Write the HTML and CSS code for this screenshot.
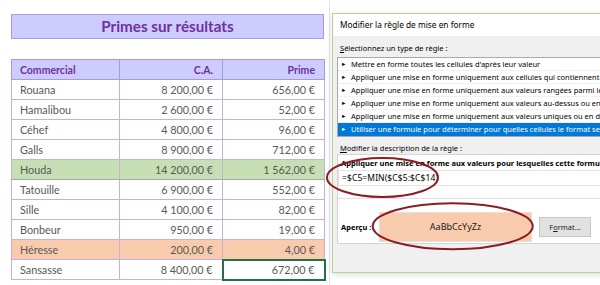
FILE: index.html
```html
<!DOCTYPE html>
<html lang="fr">
<head>
<meta charset="utf-8">
<link rel="stylesheet" href="styles.css">
</head>
<body>
<div class="page">
  <section class="sheet">
    <div class="title">Primes sur résultats</div>
    <table class="grid">
      <colgroup><col class="c1"><col class="c2"><col class="c3"></colgroup>
      <thead>
        <tr><th class="l">Commercial</th><th>C.A.</th><th>Prime</th></tr>
      </thead>
      <tbody>
        <tr><td class="l">Rouana</td><td>8 200,00 €</td><td>656,00 €</td></tr>
        <tr><td class="l">Hamalibou</td><td>2 600,00 €</td><td>52,00 €</td></tr>
        <tr><td class="l">Céhef</td><td>4 800,00 €</td><td>96,00 €</td></tr>
        <tr><td class="l">Galls</td><td>8 900,00 €</td><td>712,00 €</td></tr>
        <tr class="max"><td class="l">Houda</td><td>14 200,00 €</td><td>1 562,00 €</td></tr>
        <tr><td class="l">Tatouille</td><td>6 900,00 €</td><td>552,00 €</td></tr>
        <tr><td class="l">Sille</td><td>4 100,00 €</td><td>82,00 €</td></tr>
        <tr><td class="l">Bonbeur</td><td>950,00 €</td><td>19,00 €</td></tr>
        <tr class="min"><td class="l">Héresse</td><td>200,00 €</td><td>4,00 €</td></tr>
        <tr><td class="l">Sansasse</td><td>8 400,00 €</td><td class="sel">672,00 €</td></tr>
      </tbody>
    </table>
  </section>

  <section class="dialog">
    <div class="dlg-title">Modifier la règle de mise en forme</div>
    <div class="dlg-body">
      <div class="label"><u>S</u>électionnez un type de règle :</div>
      <ul class="rules">
        <li><span class="arr">►</span>Mettre en forme toutes les cellules d'après leur valeur</li>
        <li><span class="arr">►</span>Appliquer une mise en forme uniquement aux cellules qui contiennent</li>
        <li><span class="arr">►</span>Appliquer une mise en forme uniquement aux valeurs rangées parmi les</li>
        <li><span class="arr">►</span>Appliquer une mise en forme uniquement aux valeurs au-dessus ou en</li>
        <li><span class="arr">►</span>Appliquer une mise en forme uniquement aux valeurs uniques ou en d</li>
        <li class="active"><span class="arr">►</span>Utiliser une formule pour déterminer pour quelles cellules le format sera</li>
      </ul>
      <div class="label2"><u>M</u>odifier la description de la règle :</div>
      <div class="group">
        <div class="grp-top">
          <div class="desc">Appliquer une mise en forme aux valeurs pour lesquelles cette formule</div>
          <div class="formula">=$C5=MIN($C$5:$C$14)</div>
        </div>
        <div class="grp-bottom">
          <span class="apercu">Aperçu :</span>
          <div class="preview">AaBbCcYyZz</div>
          <button class="btn">F<u>o</u>rmat...</button>
        </div>
      </div>
    </div>
  </section>

  <svg class="marks" width="600" height="285" viewBox="0 0 600 285">
    <ellipse cx="382.5" cy="177.5" rx="55.5" ry="19.5" fill="none" stroke="#8e1b22" stroke-width="2"/>
    <ellipse cx="452.7" cy="226.3" rx="80" ry="23" fill="none" stroke="#8e1b22" stroke-width="2"/>
  </svg>
</div>
</body>
</html>
```

FILE: styles.css
```css
* { box-sizing: border-box; }
html, body { margin: 0; padding: 0; background: #fff; }
body { width: 600px; height: 285px; overflow: hidden; }

.page {
  position: relative;
  display: flex;
  width: 600px;
  height: 285px;
  overflow: hidden;
}

/* ---------- spreadsheet ---------- */
.sheet {
  flex: 0 0 330px;
  padding: 14px 0 0 11px;
  border-right: 1px solid #e4e4e4;
  font-family: Lato, "Liberation Sans", sans-serif;
}

.title {
  width: 313px;
  height: 25px;
  background: #ccccff;
  border: 1px solid #a999e0;
  color: #7030a0;
  font-weight: 700;
  font-size: 15.2px;
  line-height: 23px;
  text-align: center;
}

.grid {
  margin-top: 20px;
  width: 313px;
  border-collapse: collapse;
  table-layout: fixed;
  font-size: 10.8px;
}
.grid .c1 { width: 108px; }
.grid .c2 { width: 103px; }
.grid .c3 { width: 102px; }

.grid th, .grid td {
  height: 20px;
  padding: 0 9px 0 8px;
  border: 1px solid #c7b0e0;
  text-align: right;
  white-space: nowrap;
  vertical-align: middle;
}
.grid th {
  background: #ccccff;
  color: #7030a0;
  font-weight: 700;
  font-size: 10.5px;
  border-color: #a999e0;
}
.grid td { color: #595959; }
.grid .l { text-align: left; }

.grid tr.max td {
  background: #c6e0b4;
  border-top: 1px dashed #9e9e9e;
  border-bottom: 1px solid #a8a8a8;
}
.grid tr.min td {
  background: #f8cbad;
  border-top: 1px dashed #c4a080;
  border-bottom: 1px dashed #c4a080;
}
.grid td.sel {
  border: 2px solid #217346;
}

/* ---------- dialog ---------- */
.dialog {
  flex: 0 0 320px;
  margin: 13px 0 0 2px;
  height: 260px;
  border: 1px solid #b4d69c;
  background: #f0f0f0;
  font-family: "Noto Sans", "Open Sans", sans-serif;
  font-size: 7.5px;
  color: #000;
  box-shadow: 0 2px 6px rgba(0,0,0,0.12);
}

.dlg-title {
  height: 22px;
  background: #fff;
  padding-left: 7px;
  line-height: 22px;
  font-size: 8.3px;
}

.dlg-body {
  padding-left: 4px;
}

.label {
  height: 21px;
  padding: 6px 0 0 3px;
  line-height: 13px;
  font-size: 7.5px;
  white-space: nowrap;
}
.label2 {
  height: 17px;
  padding: 4px 0 0 3px;
  line-height: 14px;
  font-size: 7.5px;
  white-space: nowrap;
}

.rules {
  list-style: none;
  margin: 0;
  padding: 0;
  background: #fff;
  border: 1px solid #a8a8a8;
  border-right: none;
}
.rules li {
  height: 13px;
  line-height: 12px;
  padding-left: 3px;
  white-space: nowrap;
  border-bottom: 1px solid #f0f0f0;
  font-size: 7.5px;
}
.rules li.active {
  background: #0078d7;
  color: #fff;
  border-bottom-color: #0078d7;
}
.arr {
  display: inline-block;
  width: 10px;
  font-size: 5.5px;
  vertical-align: top;
}

.group {
  height: 90px;
  background: #fff;
  border: 1px solid #d4d4d4;
  border-right: none;
  display: flex;
  flex-direction: column;
}
.grp-top {
  height: 44px;
  flex: 0 0 44px;
  border-bottom: 1px solid #e0e0e0;
  padding-top: 2px;
}
.desc {
  height: 13px;
  padding-left: 3px;
  line-height: 13px;
  font-weight: 700;
  white-space: nowrap;
}
.formula {
  height: 16px;
  border: 1px solid #e3e3e3;
  border-right: none;
  padding-left: 3px;
  line-height: 14px;
  font-size: 8.5px;
  letter-spacing: 0.1px;
  white-space: nowrap;
}

.grp-bottom {
  flex: 1;
  display: flex;
  align-items: flex-end;
  padding-left: 3px;
}
.apercu {
  flex: 0 0 38px;
  align-self: center;
  margin-top: 12px;
  font-weight: 700;
  white-space: nowrap;
}
.preview {
  flex: 0 0 153px;
  height: 30px;
  margin-bottom: 1px;
  background: #f8cbad;
  border: 1px solid #e8e0d8;
  text-align: center;
  line-height: 28px;
  font-size: 9px;
  color: #1a1a1a;
}
.btn {
  flex: 0 0 52px;
  height: 20px;
  margin: 0 0 6px 7px;
  padding: 0;
  background: #e1e1e1;
  border: 1px solid #c8c8c8;
  font-family: "Noto Sans", "Open Sans", sans-serif;
  font-size: 7.5px;
  color: #1a1a1a;
}

/* ---------- annotation ellipses ---------- */
.marks {
  position: absolute;
  left: 0;
  top: 0;
  pointer-events: none;
}
```
